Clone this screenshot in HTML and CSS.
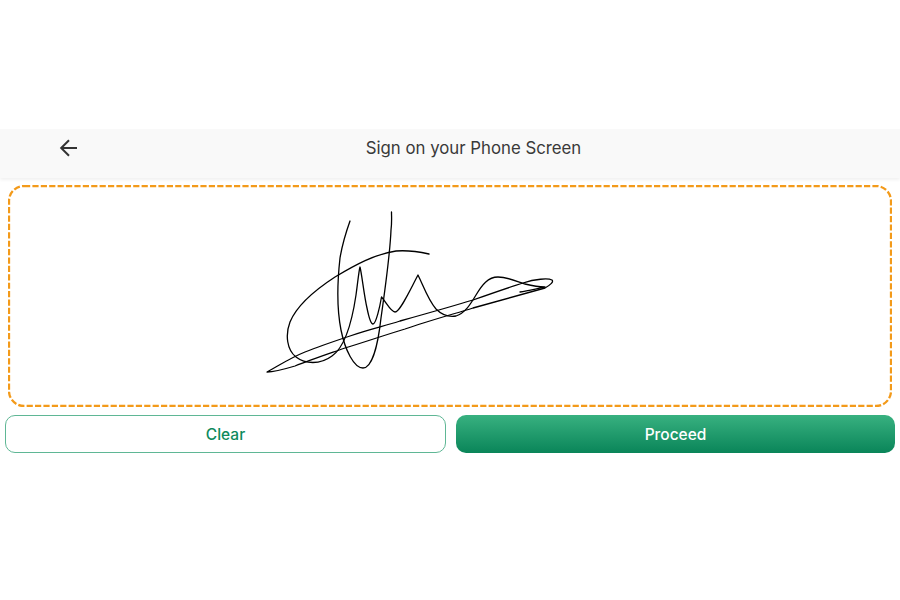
FILE: index.html
```html
<!DOCTYPE html>
<html lang="en">
<head>
<meta charset="utf-8">
<title>Sign on your Phone Screen</title>
<link rel="stylesheet" href="styles.css">
</head>
<body>
<main class="screen">
  <header class="topbar">
    <button class="back" aria-label="Back">
      <svg class="back-icon" viewBox="0 0 20 20" width="20" height="20"><path d="M18 10H2.400M10 2.200 2.200 10l7.800 7.800"/></svg>
    </button>
    <h1 class="title">Sign on your Phone Screen</h1>
  </header>
  <svg class="pad" viewBox="8 185 884 222" width="884" height="222">
    <rect class="pad-border" x="9" y="186" width="882" height="220" rx="15" ry="15"/>
    <path class="ink" d="M350 221C345 235 342 246 340 258C337 285 337 310 341 330C345 350 354 368 363 368C372 368 378 345 381 318C385 290 390 255 391 230C392 222 391.500 217 391.500 212"/>
    <path class="ink" d="M429 254C420 252 408 250 396 251C375 254 355 265 335 277C315 290 297 305 290 322C285 335 287 350 296 357C305 364 320 365 332 356C345 347 352 322 356 295C358 280 359 270 360 267C362 275 364 295 367 308C369 318 371 324 373 324C376 324 380 306 381.500 297C386 302 391 312 395 312C400 312 410 290 418 275C423 285 428 300 436 309C442 315 450 317 456 316C465 313 470 305 476 295C482 285 488 277 498 277C508 277 518 282 525 284C533 286 541 287 545 287C535 289 528 291 520 292"/>
    <path class="ink" d="M267 372C280 365 290 358 305 352C320 346 335 341 350 336C370 329 385 326 400 321C425 314 450 307 473 300C490 294 510 287 523 283C535 279 548 278 552 280C554 282 550 285 545 288C520 295 495 302 473 308C450 315 425 322 405 329C385 335 365 342 345 348C325 355 310 360 295 366C285 369 275 372 267 372Z"/>
  </svg>
  <div class="actions">
    <button class="btn btn-outline">Clear</button>
    <button class="btn btn-solid">Proceed</button>
  </div>
</main>
</body>
</html>
```

FILE: styles.css
```css
* { box-sizing: border-box; }
html, body { margin: 0; padding: 0; background: #fff; }
body { font-family: "Inter", "Liberation Sans", sans-serif; }
.screen { padding-top: 129px; width: 900px; }
.topbar {
  height: 49px;
  background: #f9f9f9;
  box-shadow: 0 2px 3px rgba(0,0,0,.06);
  display: flex;
  align-items: center;
  padding: 0 33px 11px 58px;
}
.back {
  flex: none;
  width: 22px;
  height: 22px;
  padding: 0;
  border: 0;
  background: none;
  display: flex;
  align-items: center;
  justify-content: center;
}
.back-icon { fill: none; stroke: #333; stroke-width: 2; }
.title {
  margin: 0;
  flex: 1;
  text-align: center;
  font-size: 16.800px;
  font-weight: 400;
  color: #3a3a3a;
}
.pad { display: block; margin: 7px 8px 0; }
.pad-border { fill: #fff; stroke: #f39a1a; stroke-width: 2.300; stroke-dasharray: 6.200 2.200; }
.ink { fill: none; stroke: #000; stroke-width: 1.300; stroke-linejoin: round; stroke-linecap: round; }
.actions { display: flex; gap: 10px; padding: 8px 5px 0; }
.btn {
  flex: 1 1 0;
  min-width: 0;
  height: 38px;
  padding: 0;
  border-radius: 10px;
  font-family: inherit;
  font-size: 15.500px;
  font-weight: 500;
}
.btn-outline { background: #fff; border: 1px solid #5fb795; color: #0d8a5d; }
.btn-solid { border: 0; color: #fff; background: linear-gradient(180deg, #38b180 0%, #0a8559 100%); }
```
